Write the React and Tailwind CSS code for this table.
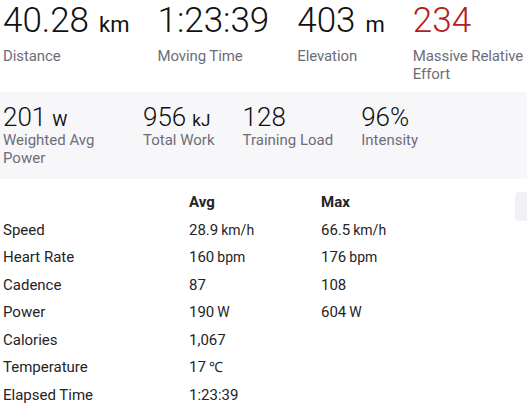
import React from "react";

const topStats = [
  { value: "40.28", unit: "km", label: "Distance", w: "" },
  { value: "1:23:39", unit: "", label: "Moving Time", w: "" },
  { value: "403", unit: "m", label: "Elevation", w: "" },
  { value: "234", unit: "", label: "Massive Relative Effort", red: true, w: "w-[120px]" },
];

const moreStats = [
  { value: "201", unit: "W", label: "Weighted Avg Power", w: "w-[112px]" },
  { value: "956", unit: "kJ", label: "Total Work", w: "" },
  { value: "128", unit: "", label: "Training Load", w: "" },
  { value: "96%", unit: "", label: "Intensity", w: "" },
];

const rows = [
  { name: "Speed", avg: ["28.9", "km/h"], max: ["66.5", "km/h"] },
  { name: "Heart Rate", avg: ["160", "bpm"], max: ["176", "bpm"] },
  { name: "Cadence", avg: ["87", ""], max: ["108", ""] },
  { name: "Power", avg: ["190", "W"], max: ["604", "W"] },
  { name: "Calories", avg: ["1,067", ""], max: null },
  { name: "Temperature", avg: ["17", "℃"], max: null },
  { name: "Elapsed Time", avg: ["1:23:39", ""], max: null },
];

function Cell({ v }) {
  if (!v) return null;
  return (
    <span>
      {v[0]}
      {v[1] && <span className="ml-[3px] text-[14px] leading-none">{v[1]}</span>}
    </span>
  );
}

export default function App() {
  return (
    <div className="w-[527px] h-[407px] overflow-hidden bg-white text-[#242428] font-['Roboto','Liberation_Sans',sans-serif]">
      <ul className="flex gap-[28px] pl-[3px]">
        {topStats.map((s) => (
          <li key={s.label} className={`shrink-0 ${s.w}`}>
            <div
              className={`h-[41px] text-[35px] font-light leading-[41px] ${
                s.red ? "text-[#b21d24]" : "text-[#111]"
              }`}
            >
              {s.value}
              {s.unit && <span className="ml-[10px] text-[22px] font-normal leading-none">{s.unit}</span>}
            </div>
            <div className="mt-[6px] text-[15px] leading-[18px] tracking-[-0.1px] text-[#6d6d78]">{s.label}</div>
          </li>
        ))}
      </ul>

      <div className="mt-[9px] h-[87px] bg-[#f7f7fa] pl-[3px] pt-[10px]">
        <ul className="flex gap-[28px]">
          {moreStats.map((s) => (
            <li key={s.label} className={`shrink-0 ${s.w}`}>
              <div className="h-[30px] text-[26px] font-light leading-[30px] text-[#111]">
                {s.value}
                {s.unit && <span className="ml-[6px] text-[17px] font-normal leading-none">{s.unit}</span>}
              </div>
              <div className="-mt-[1px] text-[15px] leading-[18px] text-[#6d6d78]">{s.label}</div>
            </li>
          ))}
        </ul>
      </div>

      <div className="mt-[10px] flex">
        <table className="w-[512px] shrink-0 table-fixed text-[15px] leading-[19.5px]">
          <thead>
            <tr>
              <th className="w-[189px] py-1" />
              <th className="w-[132px] py-1 text-left font-bold">Avg</th>
              <th className="py-1 text-left font-bold">Max</th>
            </tr>
          </thead>
          <tbody>
            {rows.map((r) => (
              <tr key={r.name}>
                <td className="py-1 pl-[3px]">{r.name}</td>
                <td className="py-1">
                  <Cell v={r.avg} />
                </td>
                <td className="py-1">
                  <Cell v={r.max} />
                </td>
              </tr>
            ))}
          </tbody>
        </table>
        <div className="ml-[3px] mt-[3px] h-[29px] w-[20px] shrink-0 rounded-l-[4px] bg-[#f0f0f5]" />
      </div>
    </div>
  );
}
